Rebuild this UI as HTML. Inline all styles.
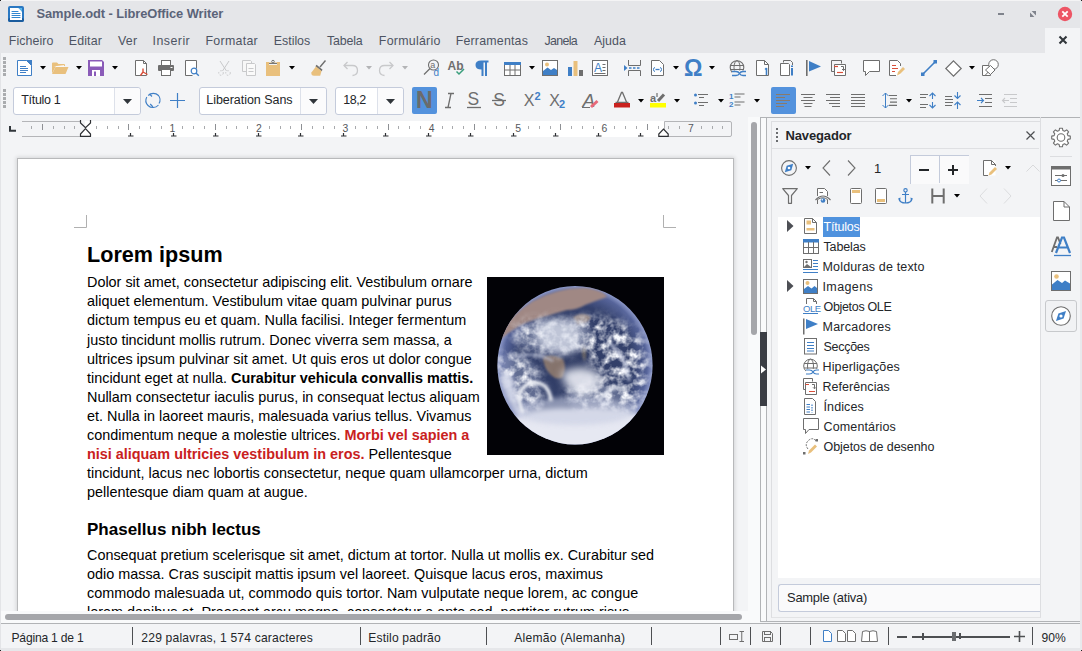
<!DOCTYPE html>
<html><head><meta charset="utf-8"><style>
html,body{margin:0;padding:0;width:1082px;height:651px;overflow:hidden;background:#f3f4f6;}
body{position:relative;font-family:"Liberation Sans", sans-serif;}
.t{position:absolute;white-space:nowrap;line-height:1;}
.r{position:absolute;}
.s{position:absolute;overflow:visible;}
.doc{position:absolute;font-family:"Liberation Sans",sans-serif;color:#000;white-space:nowrap;}
</style></head><body>
<div class="r" style="left:0px;top:0px;width:1082px;height:53px;background:#e5e6e9;"></div><div class="r" style="left:0px;top:0px;width:1082px;height:1px;background:#f4f4f5;"></div><div class="r" style="left:1045px;top:28px;width:36px;height:25px;background:#f3f4f6;"></div><svg class="s" style="left:8px;top:6px;" width="16" height="16" viewBox="0 0 16 16"><rect x="0" y="0" width="16" height="16" rx="2" fill="#2a78c2"/><rect x="0" y="12" width="16" height="4" rx="2" fill="#1b5c9e"/><path d="M2 2H10.5L14 5.5V14H2Z" fill="#fff"/><path d="M10.5 2H14V5.5Z" fill="#5ab8ec"/><path d="M4 5.5H10M4 7.5H12M4 9.5H12M4 11.5H12" stroke="#2f86d0" stroke-width="1.1" stroke-linecap="round"/></svg><div class="t" style="left:calc(36.5px + 0.00px);top:7.58px;font-size:12.9px;color:#5b6479;font-weight:bold;letter-spacing:-0.095px;">Sample.odt - LibreOffice Writer</div><div class="r" style="left:998px;top:13px;width:6px;height:2px;background:#7f838c;"></div><svg class="s" style="left:1030px;top:11px;" width="6" height="6" viewBox="0 0 6 6"><path d="M1.6 0H6V4.4Z M0 1.6V6H4.4Z" fill="#7f838c"/></svg><svg class="s" style="left:1057px;top:6px;" width="16" height="16" viewBox="0 0 16 16"><circle cx="8" cy="8" r="7.2" fill="#ed5565"/><path d="M5.3 5.3L10.7 10.7M10.7 5.3L5.3 10.7" stroke="#fff" stroke-width="1.8"/></svg><div class="t" style="left:calc(9.8px + -1.00px);top:35.20px;font-size:12.4px;color:#4d5463;font-weight:normal;letter-spacing:0.075px;">Ficheiro</div><div class="t" style="left:calc(69.8px + -1.00px);top:35.20px;font-size:12.4px;color:#4d5463;font-weight:normal;letter-spacing:0.132px;">Editar</div><div class="t" style="left:calc(118.0px + 0.00px);top:35.20px;font-size:12.4px;color:#4d5463;font-weight:normal;letter-spacing:0.214px;">Ver</div><div class="t" style="left:calc(153.5px + -1.00px);top:35.20px;font-size:12.4px;color:#4d5463;font-weight:normal;letter-spacing:0.467px;">Inserir</div><div class="t" style="left:calc(206.5px + -1.00px);top:35.20px;font-size:12.4px;color:#4d5463;font-weight:normal;letter-spacing:0.281px;">Formatar</div><div class="t" style="left:calc(274.8px + -1.00px);top:35.20px;font-size:12.4px;color:#4d5463;font-weight:normal;letter-spacing:-0.016px;">Estilos</div><div class="t" style="left:calc(327.1px + 0.00px);top:35.20px;font-size:12.4px;color:#4d5463;font-weight:normal;letter-spacing:-0.184px;">Tabela</div><div class="t" style="left:calc(379.8px + -1.00px);top:35.20px;font-size:12.4px;color:#4d5463;font-weight:normal;letter-spacing:0.264px;">Formulário</div><div class="t" style="left:calc(456.7px + -1.00px);top:35.20px;font-size:12.4px;color:#4d5463;font-weight:normal;letter-spacing:0.196px;">Ferramentas</div><div class="t" style="left:calc(544.5px + 0.00px);top:35.20px;font-size:12.4px;color:#4d5463;font-weight:normal;letter-spacing:-0.664px;">Janela</div><div class="t" style="left:calc(593.9px + 0.00px);top:35.20px;font-size:12.4px;color:#4d5463;font-weight:normal;letter-spacing:0.050px;">Ajuda</div><svg class="s" style="left:1058px;top:35px;" width="10" height="10" viewBox="0 0 10 10"><path d="M1.5 1.5L8.5 8.5M8.5 1.5L1.5 8.5" stroke="#31363b" stroke-width="2.1"/></svg><div class="r" style="left:0px;top:53px;width:1082px;height:70px;background:#f3f4f6;"></div><div class="r" style="left:3px;top:57px;width:3px;height:3px;background:#aaacaf;"></div><div class="r" style="left:3px;top:61px;width:3px;height:3px;background:#aaacaf;"></div><div class="r" style="left:3px;top:65px;width:3px;height:3px;background:#aaacaf;"></div><div class="r" style="left:3px;top:69px;width:3px;height:3px;background:#aaacaf;"></div><div class="r" style="left:3px;top:73px;width:3px;height:3px;background:#aaacaf;"></div><div class="r" style="left:3px;top:89px;width:3px;height:3px;background:#aaacaf;"></div><div class="r" style="left:3px;top:93px;width:3px;height:3px;background:#aaacaf;"></div><div class="r" style="left:3px;top:97px;width:3px;height:3px;background:#aaacaf;"></div><div class="r" style="left:3px;top:101px;width:3px;height:3px;background:#aaacaf;"></div><div class="r" style="left:3px;top:105px;width:3px;height:3px;background:#aaacaf;"></div><svg class="s" style="left:17px;top:60px;" width="15" height="16" viewBox="0 0 15 16"><path d="M0.5 0.5H9.5L14.5 5.5V15.5H0.5Z" fill="#fff" stroke="#3f7fc6"/><path d="M9 0H15V6Z" fill="#3f7fc6"/><path d="M3 6.5H9M3 8.5H11M3 10.5H11M3 12.5H9" stroke="#3f7fc6"/></svg><svg class="s" style="left:40px;top:66px;" width="6" height="4" viewBox="0 0 6 4"><path d="M0 0H6L3 3.5Z" fill="#000"/></svg><svg class="s" style="left:52px;top:62px;" width="17" height="12" viewBox="0 0 17 12"><path d="M0 1.5Q0 0.5 1 0.5H5L6.5 2H12Q13 2 13 3V4H4L0 11.5Z" fill="#e9c07d"/><path d="M1 4.5L12 3V4.5Z" fill="#fff" opacity="0.8"/><path d="M3.5 5H16.5L13.5 12H0Z" fill="#e9c07d"/></svg><svg class="s" style="left:76px;top:66px;" width="6" height="4" viewBox="0 0 6 4"><path d="M0 0H6L3 3.5Z" fill="#000"/></svg><svg class="s" style="left:88px;top:60px;" width="16" height="16" viewBox="0 0 16 16"><path d="M0 0H14L16 2V16H0Z" fill="#8a5bb8"/><rect x="2" y="1.5" width="12" height="5" fill="#fff"/><rect x="4" y="10" width="8" height="6" fill="#fff"/><rect x="6" y="11.5" width="2" height="4.5" fill="#8a5bb8"/></svg><svg class="s" style="left:111.5px;top:66px;" width="6" height="4" viewBox="0 0 6 4"><path d="M0 0H6L3 3.5Z" fill="#000"/></svg><svg class="s" style="left:135px;top:60px;" width="16" height="16" viewBox="0 0 16 16"><path d="M0.5 0.5H8.5L11.5 3.5V15.5H0.5Z" fill="#fff" stroke="#6e6e6e"/><path d="M8.5 0.5V3.5H11.5" fill="none" stroke="#6e6e6e"/><path d="M8 8.5V12M8 12L5.5 15.5M8 12L12.5 14.5" stroke="#da4f3a" stroke-width="1.4" fill="none"/></svg><svg class="s" style="left:158px;top:60px;" width="16" height="16" viewBox="0 0 16 16"><rect x="3.5" y="0.5" width="9" height="5" fill="#fff" stroke="#6e6e6e"/><rect x="0" y="5" width="16" height="6" rx="1" fill="#6e6e6e"/><rect x="3.5" y="9.5" width="9" height="6" fill="#fff" stroke="#6e6e6e"/><rect x="12.5" y="7" width="2" height="1" fill="#fff"/></svg><svg class="s" style="left:185px;top:60px;" width="15" height="16" viewBox="0 0 15 16"><rect x="0.5" y="0.5" width="11" height="15" fill="#fff"/><path d="M11.5 8.5V0.5H0.5V15.5H7.5" fill="none" stroke="#6e6e6e"/><circle cx="9" cy="11" r="2.8" fill="none" stroke="#3f7fc6" stroke-width="1.2"/><path d="M11 13L13.8 15.8" stroke="#3f7fc6" stroke-width="1.4"/></svg><svg class="s" style="left:217px;top:60px;" width="15" height="16" viewBox="0 0 15 16"><path d="M3 1L9.5 11M12 1L5.5 11" stroke="#c8c9cb" stroke-width="1"/><circle cx="4" cy="13" r="2.3" fill="none" stroke="#c8c9cb" stroke-dasharray="1.5 1.5"/><circle cx="11" cy="13" r="2.3" fill="none" stroke="#c8c9cb" stroke-dasharray="1.5 1.5"/></svg><svg class="s" style="left:242px;top:60px;" width="14" height="16" viewBox="0 0 14 16"><path d="M0.5 0.5H8.5L9.5 1.5V11.5H0.5Z" fill="#f7f7f7" stroke="#c8c9cb"/><path d="M4.5 3.5H12.5L13.5 4.5V15.5H4.5Z" fill="#fafafa" stroke="#c8c9cb"/><path d="M6.5 8.5H11.5M6.5 11.5H11.5" stroke="#c8c9cb"/></svg><svg class="s" style="left:266px;top:60px;" width="14" height="16" viewBox="0 0 14 16"><rect x="0" y="2" width="14" height="14" fill="#e9c07d"/><path d="M3 2.5H11V5H3Z" fill="#fff"/><path d="M3 3.5H11" stroke="#777" stroke-width="1.2"/><circle cx="7" cy="1.6" r="1.3" fill="none" stroke="#777"/></svg><svg class="s" style="left:289px;top:66px;" width="6" height="4" viewBox="0 0 6 4"><path d="M0 0H6L3 3.5Z" fill="#000"/></svg><svg class="s" style="left:311px;top:60px;" width="15" height="16" viewBox="0 0 15 16"><path d="M14.5 0.5L9 7" stroke="#6e6e6e" stroke-width="1.4"/><path d="M5 5.5L11 10.5" stroke="#6e6e6e" stroke-width="1.8"/><path d="M5 6.5L10.5 11L9.2 15.8H3Q0 15.8 0.4 12.6Z" fill="#e9c07d"/></svg><svg class="s" style="left:343px;top:61px;" width="16" height="15" viewBox="0 0 16 15"><path d="M1 4.5H9.5Q14.5 4.5 14.5 9.5Q14.5 14 9.5 14.5" fill="none" stroke="#c8c9cb" stroke-width="1.3"/><path d="M4.5 1L1 4.5L4.5 8" fill="none" stroke="#c8c9cb" stroke-width="1.3"/></svg><svg class="s" style="left:366px;top:66px;" width="6" height="4" viewBox="0 0 6 4"><path d="M0 0H6L3 3.5Z" fill="#b3b4b6"/></svg><svg class="s" style="left:378px;top:61px;" width="16" height="15" viewBox="0 0 16 15"><path d="M15 4.5H6.5Q1.5 4.5 1.5 9.5Q1.5 14 6.5 14.5" fill="none" stroke="#c8c9cb" stroke-width="1.3"/><path d="M11.5 1L15 4.5L11.5 8" fill="none" stroke="#c8c9cb" stroke-width="1.3"/></svg><svg class="s" style="left:402px;top:66px;" width="6" height="4" viewBox="0 0 6 4"><path d="M0 0H6L3 3.5Z" fill="#b3b4b6"/></svg><svg class="s" style="left:423px;top:59px;" width="18" height="17" viewBox="0 0 18 17"><circle cx="10.5" cy="6" r="5" fill="none" stroke="#6e6e6e" stroke-width="1.1"/><text x="7.3" y="9" font-family="Liberation Sans" font-size="9" fill="#6e6e6e">a</text><path d="M7 9.5L1 15.5" stroke="#6e6e6e" stroke-width="1.3"/><text x="10.5" y="16.8" font-family="Liberation Sans" font-size="10" fill="#3f7fc6">d</text></svg><svg class="s" style="left:448px;top:60px;" width="17" height="16" viewBox="0 0 17 16"><text x="-0.5" y="10" font-family="Liberation Sans" font-weight="bold" font-size="12" fill="#6e6e6e">Ab</text><path d="M8.5 11.5L11 14L16 9" fill="none" stroke="#3a9e7c" stroke-width="1.5"/></svg><svg class="s" style="left:475px;top:60px;" width="14" height="16" viewBox="0 0 14 16"><path d="M6 0.5H13.5V2.5H12V16H10V2.5H8.5V16H6.5V9.5Q0.5 9.5 0.5 5Q0.5 0.5 6 0.5Z" fill="#3f7fc6"/></svg><svg class="s" style="left:504px;top:60px;" width="17" height="16" viewBox="0 0 17 16"><rect x="0.5" y="2.5" width="16" height="13" fill="#fff" stroke="#6e6e6e"/><rect x="0" y="2" width="17" height="3" fill="#3f7fc6"/><path d="M0.5 10H16.5M6 5V15.5M11 5V15.5" stroke="#6e6e6e"/></svg><svg class="s" style="left:529px;top:66px;" width="6" height="4" viewBox="0 0 6 4"><path d="M0 0H6L3 3.5Z" fill="#000"/></svg><svg class="s" style="left:542px;top:60px;" width="16" height="16" viewBox="0 0 16 16"><rect x="0.5" y="0.5" width="15" height="15" fill="#fff" stroke="#6e6e6e"/><circle cx="5" cy="4.5" r="2" fill="#e9c07d"/><path d="M1 15V11L5.5 7.5L9 10L12 8L15 10V15Z" fill="#3f7fc6"/></svg><svg class="s" style="left:568px;top:60px;" width="15" height="16" viewBox="0 0 15 16"><rect x="0" y="7" width="4" height="9" fill="#3f7fc6"/><rect x="5.5" y="1" width="4" height="15" fill="#e9c07d"/><rect x="11" y="10" width="4" height="6" fill="#6e6e6e"/></svg><svg class="s" style="left:592px;top:60px;" width="17" height="16" viewBox="0 0 17 16"><rect x="0.5" y="0.5" width="15" height="15" fill="#fff" stroke="#6e6e6e"/><text x="2" y="11.5" font-family="Liberation Sans" font-size="12" fill="#3f7fc6">A</text><path d="M10.5 4.5H13.5M10.5 7.5H13.5M10.5 10.5H13.5M2.5 13.5H13.5" stroke="#6e6e6e"/></svg><svg class="s" style="left:624px;top:60px;" width="18" height="16" viewBox="0 0 18 16"><path d="M4.5 0V5.5H16.5V0M4.5 16V10.5H16.5V16" fill="none" stroke="#6e6e6e"/><path d="M0 5L3.5 8L0 11Z" fill="#3f7fc6"/><path d="M5 8H7.5M9 8H11.5M13 8H15.5" stroke="#3f7fc6" stroke-width="1.5"/></svg><svg class="s" style="left:651px;top:60px;" width="13" height="16" viewBox="0 0 13 16"><path d="M0.5 0.5H8.5L12.5 4.5V15.5H0.5Z" fill="#fff" stroke="#6e6e6e"/><path d="M4 7.5Q2.5 7.5 2.5 9.5Q2.5 11.5 4 11.5M9 7.5Q10.5 7.5 10.5 9.5Q10.5 11.5 9 11.5" fill="none" stroke="#3f7fc6"/><path d="M4.5 9.5H8.5" stroke="#3f7fc6" stroke-width="1.3"/></svg><svg class="s" style="left:673px;top:66px;" width="6" height="4" viewBox="0 0 6 4"><path d="M0 0H6L3 3.5Z" fill="#000"/></svg><svg class="s" style="left:685px;top:59px;" width="17" height="17" viewBox="0 0 17 17"><text x="-1" y="16.5" font-family="Liberation Sans" font-weight="bold" font-size="23" fill="#3f7fc6">Ω</text></svg><svg class="s" style="left:709px;top:66px;" width="6" height="4" viewBox="0 0 6 4"><path d="M0 0H6L3 3.5Z" fill="#000"/></svg><svg class="s" style="left:729px;top:60px;" width="18" height="16" viewBox="0 0 18 16"><circle cx="8" cy="7.5" r="6.8" fill="none" stroke="#6e6e6e" stroke-width="1.1"/><ellipse cx="8" cy="7.5" rx="3" ry="6.8" fill="none" stroke="#6e6e6e"/><path d="M1.5 5.5H14.5M1.5 9.5H14.5" stroke="#6e6e6e"/><rect x="3" y="10.5" width="15" height="5.5" fill="#f3f4f6"/><path d="M3 11.5H7Q9.5 11.5 10.5 13.5Q11.5 15.5 14 15.5H17M3 15.5H7Q9.5 15.5 10.5 13.5Q11.5 11.5 14 11.5H17" fill="none" stroke="#3f7fc6" stroke-width="1.3"/></svg><svg class="s" style="left:756px;top:60px;" width="15" height="16" viewBox="0 0 15 16"><path d="M0.5 0.5H8.5L12.5 4.5V15.5H0.5Z" fill="#fff" stroke="#6e6e6e"/><path d="M8.5 0.5V4.5H12.5" fill="none" stroke="#6e6e6e"/><path d="M10.5 8V15" stroke="#3f7fc6" stroke-width="1.6"/><path d="M9 9.5L10.5 8" stroke="#3f7fc6" stroke-width="1.2"/></svg><svg class="s" style="left:780px;top:60px;" width="15" height="16" viewBox="0 0 15 16"><path d="M3.5 2.5V0.5H10.5L12.5 2.5V5" fill="none" stroke="#6e6e6e"/><path d="M0.5 3.5H8.5L9.5 4.5V15.5H0.5Z" fill="#fff" stroke="#6e6e6e"/><rect x="11" y="8" width="2" height="7.5" fill="#3f7fc6"/><rect x="11" y="5.5" width="2" height="1.5" fill="#3f7fc6"/></svg><svg class="s" style="left:806px;top:60px;" width="16" height="16" viewBox="0 0 16 16"><rect x="0" y="0" width="1.6" height="16" fill="#6e6e6e"/><path d="M3 1L15 6.5L3 11.5Z" fill="#3f7fc6"/></svg><svg class="s" style="left:831px;top:60px;" width="15" height="16" viewBox="0 0 15 16"><path d="M0.5 0.5H10.5V3.5" fill="none" stroke="#6e6e6e"/><path d="M0.5 0.5V11.5H3.5" fill="none" stroke="#6e6e6e"/><path d="M3.5 4.5H14.5V15.5H3.5Z" fill="#fff" stroke="#6e6e6e"/><path d="M3 6.5H7" stroke="#da4f3a" stroke-width="1.2"/><path d="M6 12.5H12" stroke="#da4f3a" stroke-width="1.2"/><path d="M10 6.5H12.5V10.5M11 9L12.5 10.5L14 9" fill="none" stroke="#6e6e6e"/></svg><svg class="s" style="left:863px;top:60px;" width="17" height="16" viewBox="0 0 17 16"><path d="M0.5 0.5H16.5V11.5H6.5L2.5 15.5V11.5H0.5Z" fill="#fff" stroke="#6e6e6e" stroke-linejoin="round"/></svg><svg class="s" style="left:889px;top:60px;" width="16" height="16" viewBox="0 0 16 16"><rect x="0.5" y="0.5" width="11" height="15" fill="#fff"/><path d="M11.5 6V3.5L8.5 0.5H0.5V15.5H7" fill="none" stroke="#6e6e6e"/><path d="M3 5.5H7M3 8.5H9M3 11.5H6" stroke="#da4f3a" stroke-width="1"/><path d="M8 15.5L9 12L14 7L16 9L11 14Z" fill="#e9c07d"/></svg><svg class="s" style="left:921px;top:60px;" width="16" height="16" viewBox="0 0 16 16"><path d="M2 14L14 2" stroke="#3f7fc6" stroke-width="1.6"/><rect x="0" y="12.5" width="3.5" height="3.5" fill="#3f7fc6"/><rect x="12.5" y="0" width="3.5" height="3.5" fill="#3f7fc6"/></svg><svg class="s" style="left:945px;top:60px;" width="17" height="17" viewBox="0 0 17 17"><path d="M8.5 0.8L16.2 8.5L8.5 16.2L0.8 8.5Z" fill="#fff" stroke="#6e6e6e" stroke-width="1.2"/></svg><svg class="s" style="left:969px;top:66px;" width="6" height="4" viewBox="0 0 6 4"><path d="M0 0H6L3 3.5Z" fill="#000"/></svg><svg class="s" style="left:982px;top:59px;" width="17" height="17" viewBox="0 0 17 17"><path d="M0.5 6.5H8.5V16.5H0.5Z" fill="#fff" stroke="#6e6e6e"/><circle cx="11.5" cy="5.5" r="4.8" fill="#fff" stroke="#6e6e6e"/><path d="M8.5 10.5L3 16.5" stroke="#6e6e6e"/><path d="M3.5 11L8.5 6.5L13 11L8.5 15.5Z" fill="#fff" stroke="#6e6e6e"/></svg><div class="r" style="left:13px;top:87px;width:126px;height:26px;background:#fff;border:1px solid #c4cbdb;border-radius:3px"></div><div class="r" style="left:113.5px;top:88px;width:1px;height:26px;background:#dde1ea;"></div><div class="r" style="left:114.5px;top:88px;width:25.5px;height:26px;background:#fbfbfc;border-radius:0 3px 3px 0"></div><svg class="s" style="left:122.75px;top:98.5px;" width="9" height="5" viewBox="0 0 9 5"><path d="M0 0H9L4.5 5Z" fill="#31363b"/></svg><div class="t" style="left:calc(21.3px + 0.00px);top:94.42px;font-size:12.5px;color:#232629;font-weight:normal;letter-spacing:-0.334px;">Título 1</div><div class="r" style="left:199px;top:87px;width:126px;height:26px;background:#fff;border:1px solid #c4cbdb;border-radius:3px"></div><div class="r" style="left:299.5px;top:88px;width:1px;height:26px;background:#dde1ea;"></div><div class="r" style="left:300.5px;top:88px;width:25.5px;height:26px;background:#fbfbfc;border-radius:0 3px 3px 0"></div><svg class="s" style="left:308.75px;top:98.5px;" width="9" height="5" viewBox="0 0 9 5"><path d="M0 0H9L4.5 5Z" fill="#31363b"/></svg><div class="t" style="left:calc(207.3px + -1.00px);top:94.42px;font-size:12.5px;color:#232629;font-weight:normal;letter-spacing:-0.044px;">Liberation Sans</div><div class="r" style="left:335px;top:87px;width:67px;height:26px;background:#fff;border:1px solid #c4cbdb;border-radius:3px"></div><div class="r" style="left:376.5px;top:88px;width:1px;height:26px;background:#dde1ea;"></div><div class="r" style="left:377.5px;top:88px;width:25.5px;height:26px;background:#fbfbfc;border-radius:0 3px 3px 0"></div><svg class="s" style="left:385.75px;top:98.5px;" width="9" height="5" viewBox="0 0 9 5"><path d="M0 0H9L4.5 5Z" fill="#31363b"/></svg><div class="t" style="left:calc(343.3px + 0.00px);top:94.42px;font-size:12.5px;color:#232629;font-weight:normal;letter-spacing:-0.459px;">18,2</div><svg class="s" style="left:145px;top:92px;" width="17" height="17" viewBox="0 0 17 17"><path d="M3.2 3.5A7.2 7.2 0 0 1 13.5 3.5A7.2 7.2 0 0 1 14 11.5" fill="none" stroke="#3f7fc6" stroke-width="1.1"/><path d="M13.5 13A7.2 7.2 0 0 1 3 13.5A7.2 7.2 0 0 1 1.8 5" fill="none" stroke="#3f7fc6" stroke-width="1.1"/><path d="M4.5 2L7 4.5" stroke="#3f7fc6" stroke-width="1.1"/><path d="M5.2 12L8 15" stroke="#3f7fc6" stroke-width="1.1"/></svg><svg class="s" style="left:170px;top:93px;" width="15" height="15" viewBox="0 0 15 15"><path d="M7.5 0V15M0 7.5H15" stroke="#3f7fc6" stroke-width="1.2"/></svg><div class="r" style="left:412px;top:87px;width:25px;height:27px;background:#5392dd;border-radius:2px"></div><div class="t" style="left:calc(417px + -1.00px);top:88.83px;font-size:23px;color:#6b6b6b;font-weight:bold;">N</div><svg class="s" style="left:445px;top:93px;" width="9" height="15" viewBox="0 0 9 15"><path d="M3 0.5H9M0 14.5H6M6 0.5L3 14.5" stroke="#6e6e6e" stroke-width="1.3"/></svg><svg class="s" style="left:466px;top:91px;" width="16" height="18" viewBox="0 0 16 18"><text x="1.6" y="14.2" font-family="Liberation Sans" font-size="17.5" fill="#6e6e6e">S</text><path d="M1 16.5H15" stroke="#6e6e6e" stroke-width="1.3"/></svg><svg class="s" style="left:491px;top:91px;" width="16" height="18" viewBox="0 0 16 18"><text x="2.2" y="15" font-family="Liberation Sans" font-size="17.5" fill="#6e6e6e">S</text><path d="M1 9.5H15" stroke="#6e6e6e" stroke-width="1.3"/></svg><svg class="s" style="left:524px;top:92px;" width="17" height="16" viewBox="0 0 17 16"><text x="-0.3" y="14" font-family="Liberation Sans" font-size="16" fill="#6e6e6e">X</text><text x="10.5" y="7.6" font-family="Liberation Sans" font-weight="bold" font-size="11" fill="#3f7fc6">2</text></svg><svg class="s" style="left:549px;top:92px;" width="17" height="17" viewBox="0 0 17 17"><text x="0.2" y="13.5" font-family="Liberation Sans" font-size="16" fill="#6e6e6e">X</text><text x="10" y="16" font-family="Liberation Sans" font-weight="bold" font-size="11" fill="#3f7fc6">2</text></svg><svg class="s" style="left:582px;top:92px;" width="16" height="16" viewBox="0 0 16 16"><text x="0.5" y="14.5" font-family="Liberation Sans" font-style="italic" font-size="19" fill="#6e6e6e">A</text><path d="M9 15L15.5 9" stroke="#e7697a" stroke-width="3"/><path d="M0 15.5H8" stroke="#6e6e6e"/></svg><svg class="s" style="left:614px;top:92px;" width="16" height="16" viewBox="0 0 16 16"><path d="M3.5 10L7.5 0.5H8.5L12.5 10M1.5 10.5H14.5" fill="none" stroke="#6e6e6e" stroke-width="1.3"/><rect x="0" y="11" width="16" height="4.5" fill="#c9211e"/></svg><svg class="s" style="left:637.5px;top:99px;" width="6" height="4" viewBox="0 0 6 4"><path d="M0 0H6L3 3.5Z" fill="#000"/></svg><svg class="s" style="left:650px;top:92px;" width="16" height="16" viewBox="0 0 16 16"><text x="0" y="10" font-family="Liberation Sans" font-weight="bold" font-size="11" fill="#6e6e6e">a</text><path d="M8 9L14 2.5" stroke="#6e6e6e" stroke-width="3"/><path d="M7 1V5" stroke="#6e6e6e" stroke-width="1.2"/><rect x="0" y="11" width="16" height="4.5" fill="#ffff00"/></svg><svg class="s" style="left:673.5px;top:99px;" width="6" height="4" viewBox="0 0 6 4"><path d="M0 0H6L3 3.5Z" fill="#000"/></svg><svg class="s" style="left:694px;top:93px;" width="15" height="13" viewBox="0 0 15 13"><circle cx="1.5" cy="2" r="1.5" fill="#3f7fc6"/><circle cx="1.5" cy="10" r="1.5" fill="#3f7fc6"/><path d="M4 1.5H14M5 4.5H10M4 9.5H14M5 12.5H10" stroke="#6e6e6e" stroke-width="1.1"/></svg><svg class="s" style="left:718px;top:99px;" width="6" height="4" viewBox="0 0 6 4"><path d="M0 0H6L3 3.5Z" fill="#000"/></svg><svg class="s" style="left:729px;top:92px;" width="16" height="15" viewBox="0 0 16 15"><text x="0" y="7" font-family="Liberation Sans" font-weight="bold" font-size="8" fill="#3f7fc6">1</text><text x="0" y="14.5" font-family="Liberation Sans" font-weight="bold" font-size="8" fill="#3f7fc6">2</text><path d="M5.5 2H15.5M5.5 5H11.5M5.5 10H15.5M5.5 13H11.5" stroke="#6e6e6e" stroke-width="1.1"/></svg><svg class="s" style="left:754px;top:99px;" width="6" height="4" viewBox="0 0 6 4"><path d="M0 0H6L3 3.5Z" fill="#000"/></svg><div class="r" style="left:771px;top:87px;width:25px;height:27px;background:#5392dd;border-radius:2px"></div><svg class="s" style="left:776px;top:93px;" width="15" height="15" viewBox="0 0 15 15"><path d="M0 1.5H14M0 4.5H9M0 7.5H14M0 10.5H11M0 13.5H8" stroke="#8a7a6a" stroke-width="1.1"/></svg><svg class="s" style="left:801px;top:93px;" width="14" height="15" viewBox="0 0 14 15"><path d="M0 1.5H14M2.5 4.5H11.5M0 7.5H14M2.5 10.5H11.5M3.5 13.5H10.5" stroke="#6e6e6e" stroke-width="1.1"/></svg><svg class="s" style="left:825.5px;top:93px;" width="14" height="15" viewBox="0 0 14 15"><path d="M0 1.5H14M4 4.5H14M0 7.5H14M3 10.5H14M6 13.5H14" stroke="#6e6e6e" stroke-width="1.1"/></svg><svg class="s" style="left:850.5px;top:93px;" width="14" height="15" viewBox="0 0 14 15"><path d="M0 1.5H14M0 4.5H14M0 7.5H14M0 10.5H14M0 13.5H14" stroke="#6e6e6e" stroke-width="1.1"/></svg><svg class="s" style="left:881.5px;top:92px;" width="16" height="17" viewBox="0 0 16 17"><path d="M3.5 1V16M0.5 4L3.5 1L6.5 4M0.5 13L3.5 16L6.5 13" fill="none" stroke="#3f7fc6" stroke-width="1"/><path d="M7 3.5H15M8 6.8H15M8 10.1H15M7 13.4H15" stroke="#6e6e6e" stroke-width="1.1"/></svg><svg class="s" style="left:905.5px;top:99px;" width="6" height="4" viewBox="0 0 6 4"><path d="M0 0H6L3 3.5Z" fill="#000"/></svg><svg class="s" style="left:920px;top:92px;" width="16" height="17" viewBox="0 0 16 17"><path d="M0 2.5H8M0 5.5H6M0 12.5H8M0 15.5H6" stroke="#6e6e6e" stroke-width="1.1"/><path d="M12.5 1V7M9.5 4L12.5 1L15.5 4M12.5 10V16M9.5 13L12.5 16L15.5 13" fill="none" stroke="#3f7fc6" stroke-width="1.1"/></svg><svg class="s" style="left:945px;top:92px;" width="16" height="17" viewBox="0 0 16 17"><path d="M0 4.5H7M0 7.5H8M0 10.5H8M0 13.5H7" stroke="#6e6e6e" stroke-width="1.1"/><path d="M12.5 0V6.5M9.5 3.5L12.5 6.5L15.5 3.5M12.5 10V17M9.5 13L12.5 10L15.5 13" fill="none" stroke="#3f7fc6" stroke-width="1.1"/></svg><svg class="s" style="left:977px;top:93px;" width="15" height="15" viewBox="0 0 15 15"><path d="M2 1.5H15M8 5.5H15M8 9.5H15M2 13.5H15" stroke="#6e6e6e" stroke-width="1.1"/><path d="M0 7.5H6.5M4 5L6.5 7.5L4 10" fill="none" stroke="#3f7fc6" stroke-width="1.1"/></svg><svg class="s" style="left:1002px;top:93px;" width="15" height="15" viewBox="0 0 15 15"><path d="M2 1.5H15M8 5.5H15M8 9.5H15M2 13.5H15" stroke="#c8c9cb" stroke-width="1.1"/><path d="M0.5 7.5H7M3 5L0.5 7.5L3 10" fill="none" stroke="#c8c9cb" stroke-width="1.1"/></svg><div class="r" style="left:22px;top:121px;width:58px;height:14px;border-top:1px solid #b4b5b8;border-bottom:1px solid #b4b5b8"></div><div class="r" style="left:85px;top:121px;width:579px;height:16px;background:#ffffff;"></div><div class="r" style="left:664px;top:121px;width:66px;height:14px;border:1px solid #b4b5b8;border-left:1px solid #b4b5b8;border-radius:0 2px 2px 0"></div><svg class="s" style="left:9px;top:126px;" width="7" height="6" viewBox="0 0 7 6"><path d="M1 0V4.8H7" fill="none" stroke="#31363b" stroke-width="2"/></svg><svg class="s" style="left:0px;top:0px;" width="760" height="140" viewBox="0 0 760 140"><path d="M31.5 126V129" stroke="#a8aaad" stroke-width="1"/><path d="M42.5 124V130" stroke="#8e9094" stroke-width="1"/><path d="M53.5 126V129" stroke="#a8aaad" stroke-width="1"/><path d="M64.5 126V129" stroke="#a8aaad" stroke-width="1"/><path d="M74.5 126V129" stroke="#a8aaad" stroke-width="1"/><path d="M96.5 126V129" stroke="#a8aaad" stroke-width="1"/><path d="M107.5 126V129" stroke="#a8aaad" stroke-width="1"/><path d="M118.5 126V129" stroke="#a8aaad" stroke-width="1"/><path d="M128.5 124V130" stroke="#8e9094" stroke-width="1"/><path d="M139.5 126V129" stroke="#a8aaad" stroke-width="1"/><path d="M150.5 126V129" stroke="#a8aaad" stroke-width="1"/><path d="M161.5 126V129" stroke="#a8aaad" stroke-width="1"/><path d="M182.5 126V129" stroke="#a8aaad" stroke-width="1"/><path d="M193.5 126V129" stroke="#a8aaad" stroke-width="1"/><path d="M204.5 126V129" stroke="#a8aaad" stroke-width="1"/><path d="M215.5 124V130" stroke="#8e9094" stroke-width="1"/><path d="M226.5 126V129" stroke="#a8aaad" stroke-width="1"/><path d="M236.5 126V129" stroke="#a8aaad" stroke-width="1"/><path d="M247.5 126V129" stroke="#a8aaad" stroke-width="1"/><path d="M269.5 126V129" stroke="#a8aaad" stroke-width="1"/><path d="M280.5 126V129" stroke="#a8aaad" stroke-width="1"/><path d="M290.5 126V129" stroke="#a8aaad" stroke-width="1"/><path d="M301.5 124V130" stroke="#8e9094" stroke-width="1"/><path d="M312.5 126V129" stroke="#a8aaad" stroke-width="1"/><path d="M323.5 126V129" stroke="#a8aaad" stroke-width="1"/><path d="M334.5 126V129" stroke="#a8aaad" stroke-width="1"/><path d="M355.5 126V129" stroke="#a8aaad" stroke-width="1"/><path d="M366.5 126V129" stroke="#a8aaad" stroke-width="1"/><path d="M377.5 126V129" stroke="#a8aaad" stroke-width="1"/><path d="M388.5 124V130" stroke="#8e9094" stroke-width="1"/><path d="M398.5 126V129" stroke="#a8aaad" stroke-width="1"/><path d="M409.5 126V129" stroke="#a8aaad" stroke-width="1"/><path d="M420.5 126V129" stroke="#a8aaad" stroke-width="1"/><path d="M442.5 126V129" stroke="#a8aaad" stroke-width="1"/><path d="M452.5 126V129" stroke="#a8aaad" stroke-width="1"/><path d="M463.5 126V129" stroke="#a8aaad" stroke-width="1"/><path d="M474.5 124V130" stroke="#8e9094" stroke-width="1"/><path d="M485.5 126V129" stroke="#a8aaad" stroke-width="1"/><path d="M496.5 126V129" stroke="#a8aaad" stroke-width="1"/><path d="M506.5 126V129" stroke="#a8aaad" stroke-width="1"/><path d="M528.5 126V129" stroke="#a8aaad" stroke-width="1"/><path d="M539.5 126V129" stroke="#a8aaad" stroke-width="1"/><path d="M550.5 126V129" stroke="#a8aaad" stroke-width="1"/><path d="M560.5 124V130" stroke="#8e9094" stroke-width="1"/><path d="M571.5 126V129" stroke="#a8aaad" stroke-width="1"/><path d="M582.5 126V129" stroke="#a8aaad" stroke-width="1"/><path d="M593.5 126V129" stroke="#a8aaad" stroke-width="1"/><path d="M614.5 126V129" stroke="#a8aaad" stroke-width="1"/><path d="M625.5 126V129" stroke="#a8aaad" stroke-width="1"/><path d="M636.5 126V129" stroke="#a8aaad" stroke-width="1"/><path d="M647.5 124V130" stroke="#8e9094" stroke-width="1"/><path d="M658.5 126V129" stroke="#a8aaad" stroke-width="1"/><path d="M668.5 126V129" stroke="#a8aaad" stroke-width="1"/><path d="M679.5 126V129" stroke="#a8aaad" stroke-width="1"/><path d="M701.5 126V129" stroke="#a8aaad" stroke-width="1"/><path d="M712.5 126V129" stroke="#a8aaad" stroke-width="1"/><path d="M722.5 126V129" stroke="#a8aaad" stroke-width="1"/></svg><div class="t" style="left:calc(169.60000000000002px + 0.00px);top:123.50px;font-size:10.4px;color:#55585d;font-weight:normal;">1</div><div class="t" style="left:calc(256.0px + 0.00px);top:123.50px;font-size:10.4px;color:#55585d;font-weight:normal;">2</div><div class="t" style="left:calc(342.40000000000003px + 0.00px);top:123.50px;font-size:10.4px;color:#55585d;font-weight:normal;">3</div><div class="t" style="left:calc(428.8px + 0.00px);top:123.50px;font-size:10.4px;color:#55585d;font-weight:normal;">4</div><div class="t" style="left:calc(515.2px + 0.00px);top:123.50px;font-size:10.4px;color:#55585d;font-weight:normal;">5</div><div class="t" style="left:calc(601.6000000000001px + 0.00px);top:123.50px;font-size:10.4px;color:#55585d;font-weight:normal;">6</div><div class="t" style="left:calc(688.0000000000001px + 0.00px);top:123.50px;font-size:10.4px;color:#55585d;font-weight:normal;">7</div><svg class="s" style="left:0px;top:0px;" width="760" height="140" viewBox="0 0 760 140"><path d="M130.5 133V136M128.0 136H133.5" stroke="#2d2f33" stroke-width="1.2"/><path d="M173.5 133V136M171.0 136H176.5" stroke="#2d2f33" stroke-width="1.2"/><path d="M215.5 133V136M213.0 136H218.5" stroke="#2d2f33" stroke-width="1.2"/><path d="M258.5 133V136M256.0 136H261.5" stroke="#2d2f33" stroke-width="1.2"/><path d="M300.5 133V136M298.0 136H303.5" stroke="#2d2f33" stroke-width="1.2"/><path d="M343.5 133V136M341.0 136H346.5" stroke="#2d2f33" stroke-width="1.2"/><path d="M385.5 133V136M383.0 136H388.5" stroke="#2d2f33" stroke-width="1.2"/><path d="M428.5 133V136M426.0 136H431.5" stroke="#2d2f33" stroke-width="1.2"/><path d="M470.5 133V136M468.0 136H473.5" stroke="#2d2f33" stroke-width="1.2"/><path d="M513.5 133V136M511.0 136H516.5" stroke="#2d2f33" stroke-width="1.2"/><path d="M555.5 133V136M553.0 136H558.5" stroke="#2d2f33" stroke-width="1.2"/><path d="M598.5 133V136M596.0 136H601.5" stroke="#2d2f33" stroke-width="1.2"/><path d="M640.5 133V136M638.0 136H643.5" stroke="#2d2f33" stroke-width="1.2"/></svg><svg class="s" style="left:79px;top:119px;" width="13" height="19" viewBox="0 0 13 19"><path d="M1.5 1V4L6.5 8.6L11.5 4V1" fill="none" stroke="#2d2f33" stroke-width="1.2"/><path d="M6.5 9.6L1.5 15V17.4H11.5V15Z" fill="#fff" stroke="#2d2f33" stroke-width="1.2" stroke-linejoin="round"/></svg><svg class="s" style="left:658px;top:128px;" width="11" height="9" viewBox="0 0 11 9"><path d="M0.8 8.3V6L5.5 1.2L10.2 6V8.3Z" fill="#fff" stroke="#2d2f33" stroke-width="1.2"/></svg><div class="r" style="left:0px;top:137px;width:760px;height:486px;background:#f3f4f6;"></div><div class="r" style="left:0;top:137px;width:748px;height:474px;overflow:hidden"><div class="r" style="left:17px;top:21px;width:715px;height:600px;background:#fff;border:1px solid #b8b9bb;box-shadow:0 0 4px 1px rgba(0,0,0,0.12)"></div></div><svg class="s" style="left:74px;top:215px;" width="13" height="13" viewBox="0 0 13 13"><path d="M12.5 0V12.5H0" fill="none" stroke="#b0b0b0" stroke-width="1"/></svg><svg class="s" style="left:663px;top:215px;" width="13" height="13" viewBox="0 0 13 13"><path d="M0.5 0V12.5H13" fill="none" stroke="#b0b0b0" stroke-width="1"/></svg><div class="r" style="left:0;top:137px;width:748px;height:474px;overflow:hidden"><div class="doc" style="left:87px;top:106.72px;font-size:21.6px;line-height:21.6px"><b>Lorem ipsum</b></div><div class="doc" style="left:87px;top:138.21px;font-size:14.4px;line-height:14.4px">Dolor sit amet, consectetur adipiscing elit. Vestibulum ornare</div><div class="doc" style="left:87px;top:157.31px;font-size:14.4px;line-height:14.4px">aliquet elementum. Vestibulum vitae quam pulvinar purus</div><div class="doc" style="left:87px;top:176.41px;font-size:14.4px;line-height:14.4px">dictum tempus eu et quam. Nulla facilisi. Integer fermentum</div><div class="doc" style="left:87px;top:195.51px;font-size:14.4px;line-height:14.4px">justo tincidunt mollis rutrum. Donec viverra sem massa, a</div><div class="doc" style="left:87px;top:214.61px;font-size:14.4px;line-height:14.4px">ultrices ipsum pulvinar sit amet. Ut quis eros ut dolor congue</div><div class="doc" style="left:87px;top:233.71px;font-size:14.4px;line-height:14.4px">tincidunt eget at nulla. <b>Curabitur vehicula convallis mattis.</b></div><div class="doc" style="left:87px;top:252.81px;font-size:14.4px;line-height:14.4px">Nullam consectetur iaculis purus, in consequat lectus aliquam</div><div class="doc" style="left:87px;top:271.91px;font-size:14.4px;line-height:14.4px">et. Nulla in laoreet mauris, malesuada varius tellus. Vivamus</div><div class="doc" style="left:87px;top:291.01px;font-size:14.4px;line-height:14.4px">condimentum neque a molestie ultrices. <b style="color:#c9211e">Morbi vel sapien a</b></div><div class="doc" style="left:87px;top:310.11px;font-size:14.4px;line-height:14.4px"><b style="color:#c9211e">nisi aliquam ultricies vestibulum in eros.</b> Pellentesque</div><div class="doc" style="left:87px;top:329.21px;font-size:14.4px;line-height:14.4px">tincidunt, lacus nec lobortis consectetur, neque quam ullamcorper urna, dictum</div><div class="doc" style="left:87px;top:348.31px;font-size:14.4px;line-height:14.4px">pellentesque diam quam at augue.</div><div class="doc" style="left:87px;top:383.91px;font-size:17.0px;line-height:17.0px"><b>Phasellus nibh lectus</b></div><div class="doc" style="left:87px;top:410.51px;font-size:14.4px;line-height:14.4px">Consequat pretium scelerisque sit amet, dictum at tortor. Nulla ut mollis ex. Curabitur sed</div><div class="doc" style="left:87px;top:429.61px;font-size:14.4px;line-height:14.4px">odio massa. Cras suscipit mattis ipsum vel laoreet. Quisque lacus eros, maximus</div><div class="doc" style="left:87px;top:448.71px;font-size:14.4px;line-height:14.4px">commodo malesuada ut, commodo quis tortor. Nam vulputate neque lorem, ac congue</div><div class="doc" style="left:87px;top:467.81px;font-size:14.4px;line-height:14.4px">lorem dapibus et. Praesent arcu magna, consectetur a ante sed, porttitor rutrum risus</div></div><svg class="s" style="left:487px;top:277px;" width="177" height="178" viewBox="0 0 177 178"><defs><radialGradient id="eg" cx="0.5" cy="0.5" r="0.5"><stop offset="0" stop-color="#2f3b63"/><stop offset="0.75" stop-color="#34416c"/><stop offset="0.93" stop-color="#56649a"/><stop offset="1" stop-color="#8c98c8"/></radialGradient><clipPath id="ec"><ellipse cx="88" cy="88.2" rx="77.6" ry="79.2"/></clipPath><filter id="tx" x="0" y="0" width="177" height="178" filterUnits="userSpaceOnUse"><feTurbulence type="fractalNoise" baseFrequency="0.12" numOctaves="3" seed="11" result="n"/><feColorMatrix in="n" type="matrix" values="0 0 0 0 0.95  0 0 0 0 0.96  0 0 0 0 1  2.4 0 0 0 -0.85" result="c0"/><feGaussianBlur in="c0" stdDeviation="0.7" result="c"/><feGaussianBlur in="SourceGraphic" stdDeviation="6" result="m"/><feComposite in="c" in2="m" operator="in"/></filter><filter id="bl" x="-50%" y="-50%" width="200%" height="200%"><feGaussianBlur stdDeviation="1.3"/></filter><filter id="bl2" x="-50%" y="-50%" width="200%" height="200%"><feGaussianBlur stdDeviation="2.5"/></filter><filter id="bl1" x="-50%" y="-50%" width="200%" height="200%"><feGaussianBlur stdDeviation="1.5"/></filter><filter id="bl3" x="-50%" y="-50%" width="200%" height="200%"><feGaussianBlur stdDeviation="4"/></filter></defs><rect width="177" height="178" fill="#020206"/><ellipse cx="88" cy="88.2" rx="77.6" ry="79.2" fill="url(#eg)"/><g clip-path="url(#ec)"><path d="M12 56Q24 38 46 24Q72 10 98 11Q116 13 120 20Q108 24 98 28Q90 33 80 33Q66 37 50 42Q30 48 14 62Z" fill="#a08884" filter="url(#bl)"/><path d="M86 40Q96 34 104 40Q100 48 90 48Z" fill="#8f7f7c" filter="url(#bl)"/><path d="M56 80Q66 76 76 82Q80 90 76 100Q70 104 64 98Q56 90 56 80Z" fill="#85736c" filter="url(#bl)"/><path d="M96 68Q100 72 98 84Q94 80 96 68Z" fill="#7d7368" filter="url(#bl1)"/><g filter="url(#bl2)" opacity="0.35" fill="#b8c0da"><path d="M30 48Q60 40 100 44Q110 60 96 72Q70 80 40 72Q20 64 30 48Z"/><path d="M10 80Q30 70 50 90Q60 120 50 140Q20 130 10 80Z"/><path d="M80 110Q120 100 150 120Q150 150 110 150Q80 140 80 110Z"/></g><g filter="url(#tx)"><path d="M30 48Q60 40 100 44Q110 60 96 72Q70 80 40 72Q20 64 30 48Z" fill="#fff"/><path d="M100 40Q140 36 160 70Q166 110 150 130Q120 120 106 90Q96 60 100 40Z" fill="#fff"/><path d="M10 80Q30 70 50 90Q60 120 50 140Q20 130 10 80Z" fill="#fff"/><path d="M80 110Q120 100 150 120Q150 150 110 150Q80 140 80 110Z" fill="#fff"/></g><path d="M50 46Q70 38 92 46Q100 62 86 76Q66 80 52 68Q44 56 50 46Z" fill="#dfe3ef" filter="url(#bl3)" opacity="0.75"/><path d="M74 96Q96 84 114 98Q116 114 96 120Q78 114 74 96Z" fill="#eceef5" filter="url(#bl3)" opacity="0.9"/><path d="M14 146Q50 128 90 132Q130 128 164 142L164 178H14Z" fill="#e6e8f2" filter="url(#bl2)"/><ellipse cx="88" cy="134" rx="60" ry="14" fill="#c8cde2" filter="url(#bl2)" opacity="0.6"/><path d="M12 100Q20 90 26 104Q30 130 40 144Q24 140 12 100Z" fill="#d8dcec" filter="url(#bl2)" opacity="0.9"/><path d="M36 136Q26 112 44 106Q62 104 64 124" fill="none" stroke="#eef0f6" stroke-width="3.5" filter="url(#bl1)"/><path d="M112 124Q124 106 140 112" fill="none" stroke="#dfe3ee" stroke-width="3" filter="url(#bl1)"/><path d="M122 66Q140 80 142 104" fill="none" stroke="#c9cfe4" stroke-width="3" filter="url(#bl1)" opacity="0.8"/><path d="M30 80Q48 74 66 84" fill="none" stroke="#c9cfe4" stroke-width="2.5" filter="url(#bl1)" opacity="0.7"/></g></svg><div class="r" style="left:748px;top:117px;width:12px;height:494px;background:#f9fafb;"></div><div class="r" style="left:751px;top:122px;width:6px;height:213px;background:#a5a6aa;border-radius:3px"></div><div class="r" style="left:0px;top:611px;width:760px;height:12px;background:#f9fafb;"></div><div class="r" style="left:5px;top:614px;width:737px;height:6px;background:#a5a6aa;border-radius:3px"></div><div class="r" style="left:760px;top:117px;width:321px;height:506px;background:#f3f4f6;"></div><div class="r" style="left:760px;top:117px;width:320px;height:1px;background:#b1b3b6;"></div><div class="r" style="left:760px;top:117px;width:1px;height:505px;background:#b1b3b6;"></div><div class="r" style="left:761px;top:118px;width:5px;height:503px;background:#f9fafb;"></div><div class="r" style="left:766px;top:118px;width:1px;height:503px;background:#b1b3b6;"></div><div class="r" style="left:760px;top:621px;width:320px;height:1px;background:#b1b3b6;"></div><div class="r" style="left:760px;top:332px;width:7px;height:74px;background:#3a3d44;"></div><svg class="s" style="left:760px;top:365px;" width="7" height="9" viewBox="0 0 7 9"><path d="M1 0.5L6 4.5L1 8.5Z" fill="#fff"/></svg><div class="r" style="left:771px;top:121px;width:268px;height:495px;border:1px solid #dddee1;border-bottom:1px solid #e2e3e5"></div><div class="r" style="left:772px;top:148px;width:267px;height:1px;background:#dfe0e3;"></div><div class="r" style="left:776px;top:128px;width:2px;height:2px;background:#6b6d70;"></div><div class="r" style="left:776px;top:132px;width:2px;height:2px;background:#6b6d70;"></div><div class="r" style="left:776px;top:136px;width:2px;height:2px;background:#6b6d70;"></div><div class="r" style="left:776px;top:140px;width:2px;height:2px;background:#6b6d70;"></div><div class="t" style="left:calc(785.5px + 0.00px);top:129.00px;font-size:13px;color:#232629;font-weight:bold;letter-spacing:-0.141px;">Navegador</div><svg class="s" style="left:1026px;top:131px;" width="9" height="9" viewBox="0 0 9 9"><path d="M0.5 0.5L8.5 8.5M8.5 0.5L0.5 8.5" stroke="#4d4f52" stroke-width="1.2"/></svg><svg class="s" style="left:781px;top:160px;" width="16" height="16" viewBox="0 0 16 16"><circle cx="8" cy="8" r="7.4" fill="none" stroke="#6e6e6e" stroke-width="1.1"/><path d="M12.2 3.8L10.3 10.3L3.8 12.2L5.7 5.7Z" fill="#3f7fc6"/><circle cx="8" cy="8" r="1.3" fill="#fff"/></svg><svg class="s" style="left:805px;top:166px;" width="6" height="4" viewBox="0 0 6 4"><path d="M0 0H6L3 3.5Z" fill="#000"/></svg><svg class="s" style="left:822px;top:160px;" width="9" height="16" viewBox="0 0 9 16"><path d="M8 0.5L1 8L8 15.5" fill="none" stroke="#6e6e6e" stroke-width="1.1"/></svg><svg class="s" style="left:847px;top:160px;" width="9" height="16" viewBox="0 0 9 16"><path d="M1 0.5L8 8L1 15.5" fill="none" stroke="#6e6e6e" stroke-width="1.1"/></svg><div class="t" style="left:calc(874px + 0.00px);top:162.00px;font-size:13px;color:#232629;font-weight:normal;">1</div><div class="r" style="left:910px;top:155px;width:58px;height:28px;background:#fafafb;border-top:1px solid #c4cbdb;border-left:1px solid #c4cbdb"></div><div class="r" style="left:939px;top:156px;width:1px;height:27px;background:#c4cbdb;"></div><div class="r" style="left:918.5px;top:169px;width:10.5px;height:2px;background:#232629;"></div><svg class="s" style="left:948px;top:165px;" width="10" height="10" viewBox="0 0 10 10"><path d="M5 0V10M0 5H10" stroke="#232629" stroke-width="2"/></svg><svg class="s" style="left:983px;top:160px;" width="14" height="16" viewBox="0 0 14 16"><rect x="0.5" y="0.5" width="12" height="15" fill="#fff"/><path d="M12.5 6V4.5L8.5 0.5H0.5V15.5H5" fill="none" stroke="#6e6e6e"/><path d="M8.5 0.5V4.5H12.5" fill="none" stroke="#6e6e6e"/><path d="M5.5 15.5L6.5 12.5L12 7L14 9L8.5 14.5Z" fill="#e9c07d"/></svg><svg class="s" style="left:1004.5px;top:166px;" width="6" height="4" viewBox="0 0 6 4"><path d="M0 0H6L3 3.5Z" fill="#000"/></svg><svg class="s" style="left:1026px;top:164px;" width="14" height="8" viewBox="0 0 14 8"><path d="M0.5 7.5L7 1L13.5 7.5" fill="none" stroke="#d8d9db" stroke-width="1"/></svg><svg class="s" style="left:782px;top:188px;" width="16" height="16" viewBox="0 0 16 16"><path d="M0.7 0.7H15.3L9.5 7.5V15.3H6.5V7.5Z" fill="none" stroke="#6e6e6e" stroke-width="1.2" stroke-linejoin="round"/></svg><svg class="s" style="left:815px;top:188px;" width="16" height="16" viewBox="0 0 16 16"><path d="M2.5 8V0.5H9.5L12.5 3.5V8" fill="#fff" stroke="#6e6e6e"/><path d="M4.5 4.5H8" stroke="#6e6e6e"/><path d="M0.5 12Q8 4 15.5 12" fill="none" stroke="#6e6e6e" stroke-width="1.1"/><path d="M2.5 16V11.5Q8 8 12.5 11.5V16" fill="none" stroke="#6e6e6e"/><circle cx="8" cy="12.5" r="2.3" fill="#3f7fc6"/><circle cx="7.3" cy="11.8" r="0.8" fill="#fff"/></svg><svg class="s" style="left:850px;top:188px;" width="12" height="16" viewBox="0 0 12 16"><rect x="0.5" y="0.5" width="11" height="15" rx="1" fill="#fff" stroke="#6e6e6e"/><rect x="2" y="2" width="8" height="3" fill="#e9c07d"/></svg><svg class="s" style="left:875px;top:188px;" width="12" height="16" viewBox="0 0 12 16"><rect x="0.5" y="0.5" width="11" height="15" rx="1" fill="#fff" stroke="#6e6e6e"/><rect x="2" y="11" width="8" height="3" fill="#e9c07d"/></svg><svg class="s" style="left:898px;top:188px;" width="15" height="16" viewBox="0 0 15 16"><circle cx="7.5" cy="2.3" r="1.7" fill="none" stroke="#3f7fc6" stroke-width="1.1"/><path d="M7.5 4V15M4 6.5H11M1 11Q2 15 7.5 15Q13 15 14 11" fill="none" stroke="#3f7fc6" stroke-width="1.2"/><path d="M0 10.5L2.2 12.5L2.5 9.5Z M15 10.5L12.8 12.5L12.5 9.5Z" fill="#3f7fc6"/></svg><svg class="s" style="left:931px;top:188px;" width="14" height="16" viewBox="0 0 14 16"><path d="M1.3 0.5V15.5M12.7 0.5V15.5M1.3 8H12.7" stroke="#6e6e6e" stroke-width="2"/></svg><svg class="s" style="left:953.5px;top:194px;" width="6" height="4" viewBox="0 0 6 4"><path d="M0 0H6L3 3.5Z" fill="#000"/></svg><svg class="s" style="left:979px;top:188px;" width="9" height="16" viewBox="0 0 9 16"><path d="M8 0.5L1 8L8 15.5" fill="none" stroke="#dcdddf" stroke-width="1"/></svg><svg class="s" style="left:1003px;top:188px;" width="9" height="16" viewBox="0 0 9 16"><path d="M1 0.5L8 8L1 15.5" fill="none" stroke="#dcdddf" stroke-width="1"/></svg><div class="r" style="left:778px;top:217px;width:262px;height:361px;background:#ffffff;"></div><svg class="s" style="left:787px;top:220px;" width="7" height="12" viewBox="0 0 7 12"><path d="M0 0L6.5 6L0 12Z" fill="#4d4f55"/></svg><div class="r" style="left:823px;top:217px;width:37px;height:20px;background:#4f92de;"></div><div class="t" style="left:calc(823.5px + 0.00px);top:220.92px;font-size:12.5px;color:#ffffff;font-weight:normal;letter-spacing:-0.210px;">Títulos</div><div class="t" style="left:calc(823.5px + 0.00px);top:240.92px;font-size:12.5px;color:#232629;font-weight:normal;letter-spacing:-0.139px;">Tabelas</div><div class="t" style="left:calc(823.5px + -1.00px);top:260.92px;font-size:12.5px;color:#232629;font-weight:normal;letter-spacing:0.162px;">Molduras de texto</div><svg class="s" style="left:787px;top:280px;" width="7" height="12" viewBox="0 0 7 12"><path d="M0 0L6.5 6L0 12Z" fill="#4d4f55"/></svg><div class="t" style="left:calc(823.5px + -1.00px);top:280.92px;font-size:12.5px;color:#232629;font-weight:normal;letter-spacing:0.384px;">Imagens</div><div class="t" style="left:calc(823.5px + 0.00px);top:300.92px;font-size:12.5px;color:#232629;font-weight:normal;letter-spacing:-0.323px;">Objetos OLE</div><div class="t" style="left:calc(823.5px + -1.00px);top:320.92px;font-size:12.5px;color:#232629;font-weight:normal;letter-spacing:0.250px;">Marcadores</div><div class="t" style="left:calc(823.5px + 0.00px);top:340.92px;font-size:12.5px;color:#232629;font-weight:normal;letter-spacing:-0.282px;">Secções</div><div class="t" style="left:calc(823.5px + -1.00px);top:360.92px;font-size:12.5px;color:#232629;font-weight:normal;letter-spacing:0.126px;">Hiperligações</div><div class="t" style="left:calc(823.5px + -1.00px);top:380.92px;font-size:12.5px;color:#232629;font-weight:normal;letter-spacing:0.055px;">Referências</div><div class="t" style="left:calc(823.5px + 0.00px);top:400.92px;font-size:12.5px;color:#232629;font-weight:normal;letter-spacing:0.107px;">Índices</div><div class="t" style="left:calc(823.5px + 0.00px);top:420.92px;font-size:12.5px;color:#232629;font-weight:normal;letter-spacing:0.139px;">Comentários</div><div class="t" style="left:calc(823.5px + 0.00px);top:440.92px;font-size:12.5px;color:#232629;font-weight:normal;letter-spacing:-0.055px;">Objetos de desenho</div><svg class="s" style="left:803px;top:218px;" width="16" height="17" viewBox="0 0 16 17"><path d="M1.5 0.5H9.5L13.5 4.5V15.5H1.5Z" fill="#fff" stroke="#6e6e6e"/><path d="M9.5 0.5V4.5H13.5" fill="none" stroke="#6e6e6e"/><rect x="3.5" y="2.5" width="4.5" height="4" fill="#e9c07d"/><rect x="3.5" y="10" width="8" height="2.5" fill="#e9c07d"/></svg><svg class="s" style="left:803px;top:238px;" width="16" height="17" viewBox="0 0 16 17"><rect x="0.5" y="1.5" width="15" height="14" fill="#fff" stroke="#6e6e6e"/><rect x="0" y="1" width="16" height="3.5" fill="#3f7fc6"/><path d="M0.5 9.5H15.5M5.5 4V15.5M10.5 4V15.5" stroke="#6e6e6e"/></svg><svg class="s" style="left:803px;top:258px;" width="16" height="17" viewBox="0 0 16 17"><rect x="0.5" y="1.5" width="8" height="8" fill="#fff" stroke="#6e6e6e"/><path d="M1 9L4 6L8 9Z" fill="#6e6e6e"/><circle cx="3.5" cy="4" r="1.2" fill="#6e6e6e"/><path d="M10 2.5H15M10 5.5H15M10 8.5H15M0 11.5H15M0 14.5H15" stroke="#3f7fc6"/></svg><svg class="s" style="left:803px;top:278px;" width="16" height="17" viewBox="0 0 16 17"><rect x="0.5" y="1.5" width="14" height="14" fill="#fff" stroke="#6e6e6e"/><circle cx="4.5" cy="5" r="2" fill="#e9c07d"/><path d="M1 15V11L5 8L8.5 10.5L11.5 8L14 10V15Z" fill="#3f7fc6"/></svg><svg class="s" style="left:803px;top:298px;" width="16" height="17" viewBox="0 0 16 17"><path d="M3.5 6V0.5H10.5L13.5 3.5V6" fill="none" stroke="#6e6e6e"/><path d="M10.5 0.5V3.5H13.5" fill="none" stroke="#6e6e6e"/><text x="0" y="14" font-family="Liberation Sans" font-size="9.5" letter-spacing="-0.4" fill="#3f7fc6">OLE</text><path d="M0 15.5H15" stroke="#3f7fc6"/></svg><svg class="s" style="left:803px;top:318px;" width="16" height="17" viewBox="0 0 16 17"><rect x="0" y="0.5" width="1.5" height="16" fill="#6e6e6e"/><path d="M3 1L15 6L3 11Z" fill="#3f7fc6"/></svg><svg class="s" style="left:803px;top:338px;" width="16" height="17" viewBox="0 0 16 17"><rect x="1.5" y="0.5" width="12" height="15.5" fill="#fff" stroke="#6e6e6e"/><path d="M4 4.5H11M4 7.5H11M4 10.5H11M4 13H11" stroke="#3f7fc6"/></svg><svg class="s" style="left:803px;top:358px;" width="16" height="17" viewBox="0 0 16 17"><circle cx="7.5" cy="8" r="6.8" fill="none" stroke="#6e6e6e"/><ellipse cx="7.5" cy="8" rx="3" ry="6.8" fill="none" stroke="#6e6e6e"/><path d="M1 5.5H14M1 10H14" stroke="#6e6e6e"/><rect x="3" y="11" width="14" height="6" fill="#fff"/><path d="M3 12H6.5Q9 12 10 14Q11 16 13.5 16H16M3 16H6.5Q9 16 10 14Q11 12 13.5 12H16" fill="none" stroke="#3f7fc6" stroke-width="1.2"/></svg><svg class="s" style="left:803px;top:378px;" width="16" height="17" viewBox="0 0 16 17"><path d="M0.5 0.5H9.5V3.5M0.5 0.5V11.5H2.5" fill="none" stroke="#6e6e6e"/><path d="M2.5 4.5H13.5V16.5H2.5Z" fill="#fff" stroke="#6e6e6e"/><path d="M2.5 6.5H6M6 13.5H12" stroke="#da4f3a" stroke-width="1.2"/><path d="M9 6.5H11.5V10.5M10 9.3L11.5 10.8L13 9.3" fill="none" stroke="#6e6e6e"/></svg><svg class="s" style="left:803px;top:398px;" width="16" height="17" viewBox="0 0 16 17"><path d="M1.5 0.5H9.5L12.5 3.5V16.5H1.5Z" fill="#fff" stroke="#6e6e6e"/><path d="M3.5 6.5H7M3.5 9H7M3.5 11.5H7M3.5 14H7" stroke="#3f7fc6"/><path d="M9 6.5V14.5" stroke="#3f7fc6" stroke-width="1.2" stroke-dasharray="1.5 1"/></svg><svg class="s" style="left:803px;top:418px;" width="16" height="17" viewBox="0 0 16 17"><path d="M0.5 0.5H15.5V11.5H6L2.5 15.5V11.5H0.5Z" fill="#fff" stroke="#6e6e6e" stroke-linejoin="round"/></svg><svg class="s" style="left:803px;top:438px;" width="16" height="17" viewBox="0 0 16 17"><path d="M5 11Q1 6 6 2Q10 -1 13 3" fill="none" stroke="#6e6e6e" stroke-dasharray="2 1.2"/><rect x="0" y="14" width="2.5" height="2.5" fill="#6e6e6e"/><rect x="12.5" y="1" width="2.5" height="2.5" fill="#6e6e6e"/><path d="M5 16L6 12.5L12 6.5L14 8.5L8 14.5Z" fill="#e9c07d"/></svg><div class="r" style="left:778px;top:584px;width:262px;height:26px;background:#fafafb;border:1px solid #c4cbdb;border-right:none;border-radius:3px 0 0 3px"></div><div class="r" style="left:1040px;top:117px;width:1px;height:500px;background:#dddee1;"></div><div class="t" style="left:calc(787px + 0.00px);top:591.88px;font-size:12.9px;color:#232629;font-weight:normal;letter-spacing:-0.216px;">Sample (ativa)</div><svg class="s" style="left:1051px;top:127px;" width="20" height="20" viewBox="0 0 20 20"><path d="M8.6 1.2H11.4L11.9 3.6L13.6 4.3L15.7 2.9L17.6 4.9L16.2 6.9L16.9 8.6L19.3 9.1V11.9L16.9 12.4L16.2 14.1L17.6 16.1L15.6 18.1L13.6 16.7L11.9 17.4L11.4 19.8H8.6L8.1 17.4L6.4 16.7L4.4 18.1L2.4 16.1L3.8 14.1L3.1 12.4L0.7 11.9V9.1L3.1 8.6L3.8 6.9L2.4 4.9L4.4 2.9L6.4 4.3L8.1 3.6Z" fill="#fff" stroke="#6e6e6e" stroke-width="1.1" stroke-linejoin="round"/><circle cx="10" cy="10.5" r="3.8" fill="none" stroke="#6e6e6e" stroke-width="1.1"/></svg><div class="r" style="left:1050px;top:156px;width:22px;height:1px;background:#dcdde0;"></div><svg class="s" style="left:1051px;top:166px;" width="20" height="20" viewBox="0 0 20 20"><rect x="0.5" y="0.5" width="19" height="19" fill="#fff" stroke="#6e6e6e"/><rect x="0" y="0" width="20" height="3.5" fill="#6e6e6e"/><path d="M4 9.5H16M4 14.5H16" stroke="#6e6e6e"/><circle cx="12" cy="9.5" r="1.5" fill="#6e6e6e"/><circle cx="8" cy="14.5" r="1.5" fill="#fff" stroke="#3f7fc6"/></svg><svg class="s" style="left:1053px;top:201px;" width="17" height="20" viewBox="0 0 17 20"><path d="M0.5 0.5H11L16.5 6V19.5H0.5Z" fill="#fff" stroke="#6e6e6e" stroke-linejoin="round"/><path d="M11 0.5V6H16.5" fill="none" stroke="#6e6e6e"/></svg><svg class="s" style="left:1051px;top:235px;" width="21" height="22" viewBox="0 0 21 22"><path d="M0.8 17L6 2.5H7L9.5 9M2.5 12H6" fill="none" stroke="#6e6e6e" stroke-width="1.8"/><path d="M5 18L11 2.5H13L19 18M7.5 12.5H16.5" fill="none" stroke="#3f7fc6" stroke-width="2.2"/><path d="M3 20.5H20" stroke="#3f7fc6" stroke-width="1.3"/></svg><svg class="s" style="left:1051px;top:271px;" width="20" height="20" viewBox="0 0 20 20"><rect x="0.5" y="0.5" width="19" height="19" fill="#fff" stroke="#6e6e6e"/><circle cx="5.5" cy="5.5" r="2.3" fill="#e9c07d"/><path d="M1 19V13.5L6.5 9L11 12L14 9.5L19 12.5V19Z" fill="#3f7fc6"/></svg><div class="r" style="left:1045px;top:300px;width:30px;height:30px;border:1px solid #c7c9cc;border-radius:3px;background:#f1f2f4"></div><svg class="s" style="left:1051px;top:306px;" width="20" height="20" viewBox="0 0 20 20"><circle cx="10" cy="10" r="9.3" fill="#fff" stroke="#6e6e6e" stroke-width="1.1"/><path d="M15 5L12.6 12.6L5 15L7.4 7.4Z" fill="#3f7fc6"/><circle cx="10" cy="10" r="1.6" fill="#fff"/></svg><div class="r" style="left:0px;top:623px;width:1081px;height:1px;background:#b1b3b6;"></div><div class="r" style="left:0px;top:624px;width:1081px;height:24px;background:#f3f4f6;"></div><div class="r" style="left:0px;top:648px;width:1082px;height:3px;background:#e6e7ea;"></div><div class="r" style="left:1080px;top:0px;width:2px;height:651px;background:#e8e9ec;"></div><div class="r" style="left:0px;top:53px;width:1px;height:598px;background:#e3e4e7;"></div><div class="r" style="left:132px;top:627px;width:1px;height:18px;background:#4d4f52;"></div><div class="r" style="left:360px;top:627px;width:1px;height:18px;background:#4d4f52;"></div><div class="r" style="left:486px;top:627px;width:1px;height:18px;background:#4d4f52;"></div><div class="r" style="left:651px;top:627px;width:1px;height:18px;background:#4d4f52;"></div><div class="r" style="left:720px;top:627px;width:1px;height:18px;background:#4d4f52;"></div><div class="r" style="left:750px;top:627px;width:1px;height:18px;background:#4d4f52;"></div><div class="r" style="left:780px;top:627px;width:1px;height:18px;background:#4d4f52;"></div><div class="r" style="left:810px;top:627px;width:1px;height:18px;background:#4d4f52;"></div><div class="r" style="left:888px;top:627px;width:1px;height:18px;background:#4d4f52;"></div><div class="r" style="left:1032px;top:627px;width:1px;height:18px;background:#4d4f52;"></div><div class="t" style="left:calc(11.5px + 0.00px);top:631.56px;font-size:12.1px;color:#232629;font-weight:normal;letter-spacing:-0.201px;">Página 1 de 1</div><div class="t" style="left:calc(141.3px + 0.00px);top:631.56px;font-size:12.1px;color:#232629;font-weight:normal;letter-spacing:0.189px;">229 palavras, 1 574 caracteres</div><div class="t" style="left:calc(368.3px + 0.00px);top:631.56px;font-size:12.1px;color:#232629;font-weight:normal;letter-spacing:0.153px;">Estilo padrão</div><div class="t" style="left:calc(514.2px + 0.00px);top:631.56px;font-size:12.1px;color:#232629;font-weight:normal;letter-spacing:0.241px;">Alemão (Alemanha)</div><svg class="s" style="left:729px;top:631px;" width="16" height="11" viewBox="0 0 16 11"><rect x="0.5" y="3.5" width="8" height="5" fill="none" stroke="#6e6e6e"/><path d="M10.5 0.5H15M10.5 10.5H15M12.75 0.5V10.5" stroke="#6e6e6e"/></svg><svg class="s" style="left:762px;top:631px;" width="11" height="11" viewBox="0 0 11 11"><path d="M0.5 0.5H8.5L10.5 2.5V10.5H0.5Z" fill="none" stroke="#6e6e6e"/><rect x="2.5" y="0.5" width="6" height="3" fill="none" stroke="#6e6e6e"/><rect x="2.5" y="6.5" width="6" height="4" fill="none" stroke="#6e6e6e"/></svg><svg class="s" style="left:823px;top:630px;" width="9" height="12" viewBox="0 0 9 12"><path d="M0.5 0.5H5.5L8.5 3.5V11.5H0.5Z" fill="#fff" stroke="#3f7fc6"/></svg><svg class="s" style="left:837px;top:630px;" width="19" height="12" viewBox="0 0 19 12"><path d="M0.5 0.5H5.5L8.5 3.5V11.5H0.5Z" fill="#fff" stroke="#6e6e6e"/><path d="M10.5 0.5H15.5L18.5 3.5V11.5H10.5Z" fill="#fff" stroke="#6e6e6e"/></svg><svg class="s" style="left:861px;top:630px;" width="17" height="12" viewBox="0 0 17 12"><path d="M8.5 1.5Q5 0 1.5 1.5L0.5 11.5H8.5ZM8.5 1.5Q12 0 15.5 1.5L16.5 11.5H8.5Z" fill="#fff" stroke="#6e6e6e"/></svg><div class="r" style="left:897px;top:636px;width:10px;height:1.6px;background:#4d4f52;"></div><div class="r" style="left:912px;top:635.5px;width:98px;height:2px;background:#4d4f52;"></div><div class="r" style="left:922px;top:633px;width:2px;height:7px;background:#4d4f52;"></div><div class="r" style="left:952px;top:632px;width:4px;height:9px;background:#6b6d70;"></div><div class="r" style="left:959px;top:633px;width:2px;height:6px;background:#4d4f52;"></div><svg class="s" style="left:1014px;top:631px;" width="11" height="11" viewBox="0 0 11 11"><path d="M5.5 0V11M0 5.5H11" stroke="#4d4f52" stroke-width="1.6"/></svg><div class="t" style="left:calc(1041.5px + 0.00px);top:631.56px;font-size:12.1px;color:#232629;font-weight:normal;letter-spacing:0.074px;">90%</div><div class="r" style="left:0px;top:0px;width:1px;height:1px;background:#202020;"></div><div class="r" style="left:1081px;top:0px;width:1px;height:1px;background:#202020;"></div><div class="r" style="left:0px;top:650px;width:1px;height:1px;background:#202020;"></div><div class="r" style="left:1081px;top:650px;width:1px;height:1px;background:#202020;"></div>
</body></html>
